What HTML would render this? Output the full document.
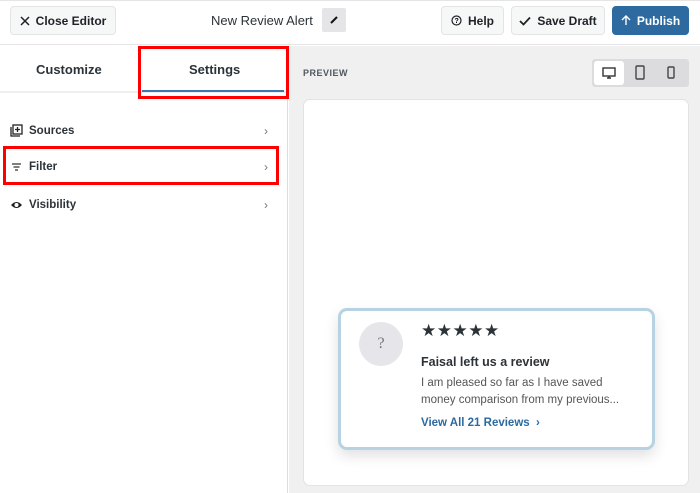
<!DOCTYPE html><html><head><style>
*{box-sizing:border-box;margin:0;padding:0}
body{width:700px;height:493px;overflow:hidden;font-family:"Liberation Sans",sans-serif;background:#fff;position:relative;color:#1d2327}
.a{position:absolute}
.btn{position:absolute;top:6px;height:29px;border:1px solid #e2e4e7;border-radius:4px;background:#f6f7f7;font-size:12px;font-weight:bold;display:flex;align-items:center;justify-content:center;gap:6px;color:#1d2327}
.row{position:absolute;left:10px;width:262px;font-size:11.5px;font-weight:bold;display:flex;align-items:center;color:#2c3338}
.row .c{position:absolute;right:4px;color:#777;font-weight:normal;font-size:12px}
</style></head><body>
<div class="a" style="left:0;top:0;width:700px;height:45px;border-bottom:1px solid #e5e5e5;border-top:1px solid #e5e5e5"></div>
<div class="btn" style="left:10px;width:106px"><svg width="10" height="10" viewBox="0 0 10 10"><path d="M1 1L9 9M9 1L1 9" stroke="#1d2327" stroke-width="1.5"/></svg>Close Editor</div>
<div class="a" style="left:211px;top:13px;font-size:13px;color:#2c3338">New Review Alert</div>
<div class="a" style="left:322px;top:8px;width:24px;height:24px;background:#e5e5e8;border-radius:2px"><svg width="24" height="24"><path d="M9 15L15 9" stroke="#111" stroke-width="2"/></svg></div>
<div class="btn" style="left:441px;width:63px"><svg width="11" height="11"><circle cx="5.5" cy="5.5" r="4.5" fill="none" stroke="#1d2327" stroke-width="1.2"/><text x="3.5" y="8" font-size="7" font-family="Liberation Sans">?</text></svg>Help</div>
<div class="btn" style="left:511px;width:94px"><svg width="12" height="10"><path d="M1 5L4.5 8.5L11 1.5" fill="none" stroke="#1d2327" stroke-width="1.8"/></svg>Save Draft</div>
<div class="btn" style="left:612px;width:77px;background:#2c6aa0;border-color:#2c6aa0;color:#fff"><svg width="10" height="11"><path d="M5 10V1M1 5L5 1L9 5" fill="none" stroke="#fff" stroke-width="1.4"/></svg>Publish</div>
<div class="a" style="left:0;top:46px;width:288px;height:447px;border-right:1px solid #ddd"></div>
<div class="a" style="left:0;top:91px;width:287px;height:2px;background:#eee"></div>
<div class="a" style="left:142px;top:90px;width:142px;height:2px;background:#3b75b3"></div>
<div class="a" style="left:36px;top:62px;font-size:13px;font-weight:bold;color:#2c3338">Customize</div>
<div class="a" style="left:189px;top:62px;font-size:13px;font-weight:bold;color:#2c3338">Settings</div>
<div class="a" style="left:138px;top:46px;width:151px;height:53px;border:3px solid #f00"></div>
<div class="row" style="top:124px"><svg width="13" height="13" style="margin-right:6px"><rect x="3" y="1" width="9" height="9" fill="none" stroke="#222" stroke-width="1.3"/><path d="M1 3V12H10M7.5 3V8M5 5.5H10" stroke="#222" stroke-width="1.3" fill="none"/></svg>Sources<span class="c">›</span></div>
<div class="row" style="top:161px"><svg width="13" height="10" style="margin-right:6px"><path d="M2 2H11M3.5 5H9.5M5 8H8" stroke="#333" stroke-width="1.2"/></svg>Filter<span class="c">›</span></div>
<div class="a" style="left:3px;top:146px;width:276px;height:39px;border:3px solid #f00"></div>
<div class="row" style="top:199px"><svg width="13" height="10" style="margin-right:6px"><path d="M1 5Q6.5 -1 12 5Q6.5 11 1 5Z" fill="#222"/><circle cx="6.5" cy="5" r="2" fill="#fff"/></svg>Visibility<span class="c">›</span></div>
<div class="a" style="left:289px;top:46px;width:411px;height:447px;background:#f0f0f1"></div>
<div class="a" style="left:303px;top:68px;font-size:9px;font-weight:bold;color:#50575e;letter-spacing:.5px">PREVIEW</div>
<div class="a" style="left:592px;top:59px;width:97px;height:28px;background:#dcdcde;border-radius:3px"></div>
<div class="a" style="left:594px;top:61px;width:30px;height:24px;background:#fff;border-radius:3px"><svg width="30" height="24"><rect x="9" y="7" width="12" height="8" fill="none" stroke="#333" stroke-width="1.4"/><path d="M13 17H17M15 15V17" stroke="#333" stroke-width="1.4"/></svg></div>
<svg class="a" style="left:633px;top:64px" width="14" height="18"><rect x="3" y="2" width="8" height="13" rx="1" fill="none" stroke="#444" stroke-width="1.4"/></svg>
<svg class="a" style="left:664px;top:64px" width="14" height="18"><rect x="4" y="3" width="6" height="11" rx="1" fill="none" stroke="#444" stroke-width="1.4"/></svg>
<div class="a" style="left:303px;top:99px;width:386px;height:387px;background:#fff;border-radius:7px;border:1px solid #e3e3e3"></div>
<div class="a" style="left:338px;top:308px;width:317px;height:142px;background:#fff;border:3px solid #b5d3e2;border-radius:9px;box-shadow:0 6px 14px rgba(0,0,0,.12)"></div>
<div class="a" style="left:359px;top:322px;width:44px;height:44px;border-radius:50%;background:#e6e6ea;color:#777;font:16px 'Liberation Serif',serif;text-align:center;line-height:44px">?</div>
<div class="a" style="left:421px;top:321px;font-size:17px;color:#2c3338;letter-spacing:0.5px">★★★★★</div>
<div class="a" style="left:421px;top:355px;font-size:12.5px;font-weight:bold;color:#2c3338">Faisal left us a review</div>
<div class="a" style="left:421px;top:375px;font-size:11.5px;color:#555;line-height:17px">I am pleased so far as I have saved<br>money comparison from my previous...</div>
<div class="a" style="left:421px;top:417px;font-size:11.5px;font-weight:bold;color:#2c6aa0">View All 21 Reviews &nbsp;›</div>
</body></html>
